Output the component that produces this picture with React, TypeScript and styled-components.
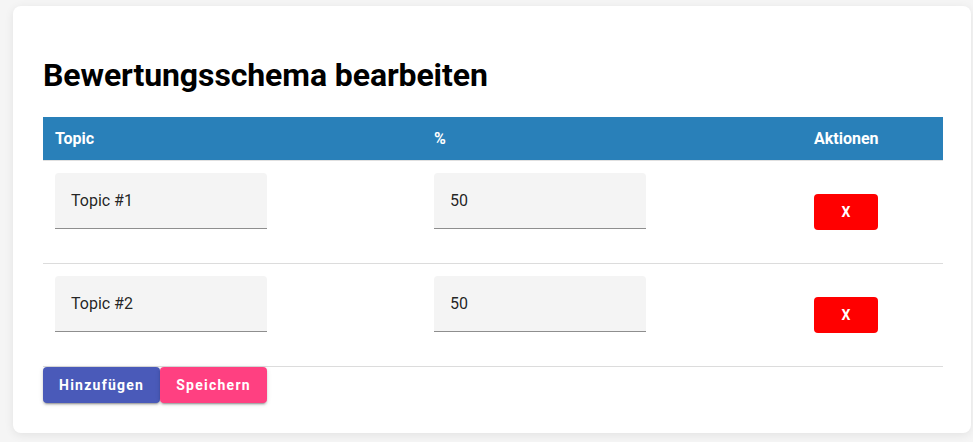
import styled, { createGlobalStyle } from 'styled-components'

const GlobalStyle = createGlobalStyle`
  html, body {
    margin: 0;
    padding: 0;
    background: #f5f5f5;
    font-family: Roboto, "Liberation Sans", Arial, sans-serif;
  }
`

const Page = styled.div`
  padding: 6px 2px 9px 13px;
`

const Card = styled.div`
  background: #fff;
  border-radius: 8px;
  box-shadow: 0 2px 10px rgba(0, 0, 0, 0.08);
  padding: 30px;
`

const Title = styled.h1`
  font-size: 32px;
  font-weight: 700;
  color: #000;
  margin: 21px 0 22px;
  line-height: 1.172;
  letter-spacing: -0.1px;
`

const Table = styled.table`
  width: 900px;
  border-collapse: collapse;
  table-layout: fixed;
`

const HeadCell = styled.th<{ $width: number }>`
  width: ${p => p.$width}px;
  background: #2980b9;
  color: #fff;
  font-size: 16px;
  font-weight: 700;
  text-align: left;
  padding: 12px;
  height: 43px;
  box-sizing: border-box;
  border-bottom: 1px solid #e0e0e0;
`

const Row = styled.tr`
  border-bottom: 1px solid #dcdcdc;
`

const Cell = styled.td`
  padding: 0 12px;
  height: 102px;
  vertical-align: middle;
`

const Field = styled.div`
  width: 212px;
  height: 56px;
  margin-bottom: 21px;
  box-sizing: border-box;
  background: #f4f4f4;
  border-radius: 4px 4px 0 0;
  border-bottom: 1px solid #8e8e8e;
  display: flex;
  align-items: center;
  padding: 0 16px;
  font-size: 16px;
  color: rgba(0, 0, 0, 0.87);
`

const DeleteButton = styled.button`
  width: 64px;
  height: 36px;
  border: none;
  border-radius: 4px;
  background: #ff0000;
  color: #fff;
  font-family: inherit;
  font-size: 14px;
  font-weight: 700;
`

const Actions = styled.div`
  display: flex;
`

const ActionButton = styled.button<{ $color: string }>`
  height: 36px;
  padding: 0 16px;
  border: none;
  border-radius: 4px;
  background: ${p => p.$color};
  color: #fff;
  font-family: inherit;
  font-size: 14px;
  font-weight: 700;
  letter-spacing: 1.25px;
  box-shadow: 0 3px 1px -2px rgba(0, 0, 0, 0.2), 0 2px 2px 0 rgba(0, 0, 0, 0.14),
    0 1px 5px 0 rgba(0, 0, 0, 0.12);
`

const topics = [
  { name: 'Topic #1', percent: 50 },
  { name: 'Topic #2', percent: 50 },
]

export default function App() {
  return (
    <>
      <GlobalStyle />
      <Page>
        <Card>
          <Title>Bewertungsschema bearbeiten</Title>
          <Table>
            <thead>
              <tr>
                <HeadCell $width={379}>Topic</HeadCell>
                <HeadCell $width={380}>%</HeadCell>
                <HeadCell $width={141}>Aktionen</HeadCell>
              </tr>
            </thead>
            <tbody>
              {topics.map(t => (
                <Row key={t.name}>
                  <Cell>
                    <Field>{t.name}</Field>
                  </Cell>
                  <Cell>
                    <Field>{t.percent}</Field>
                  </Cell>
                  <Cell>
                    <DeleteButton>X</DeleteButton>
                  </Cell>
                </Row>
              ))}
            </tbody>
          </Table>
          <Actions>
            <ActionButton $color="#4a5ab9">Hinzufügen</ActionButton>
            <ActionButton $color="#ff4081">Speichern</ActionButton>
          </Actions>
        </Card>
      </Page>
    </>
  )
}
